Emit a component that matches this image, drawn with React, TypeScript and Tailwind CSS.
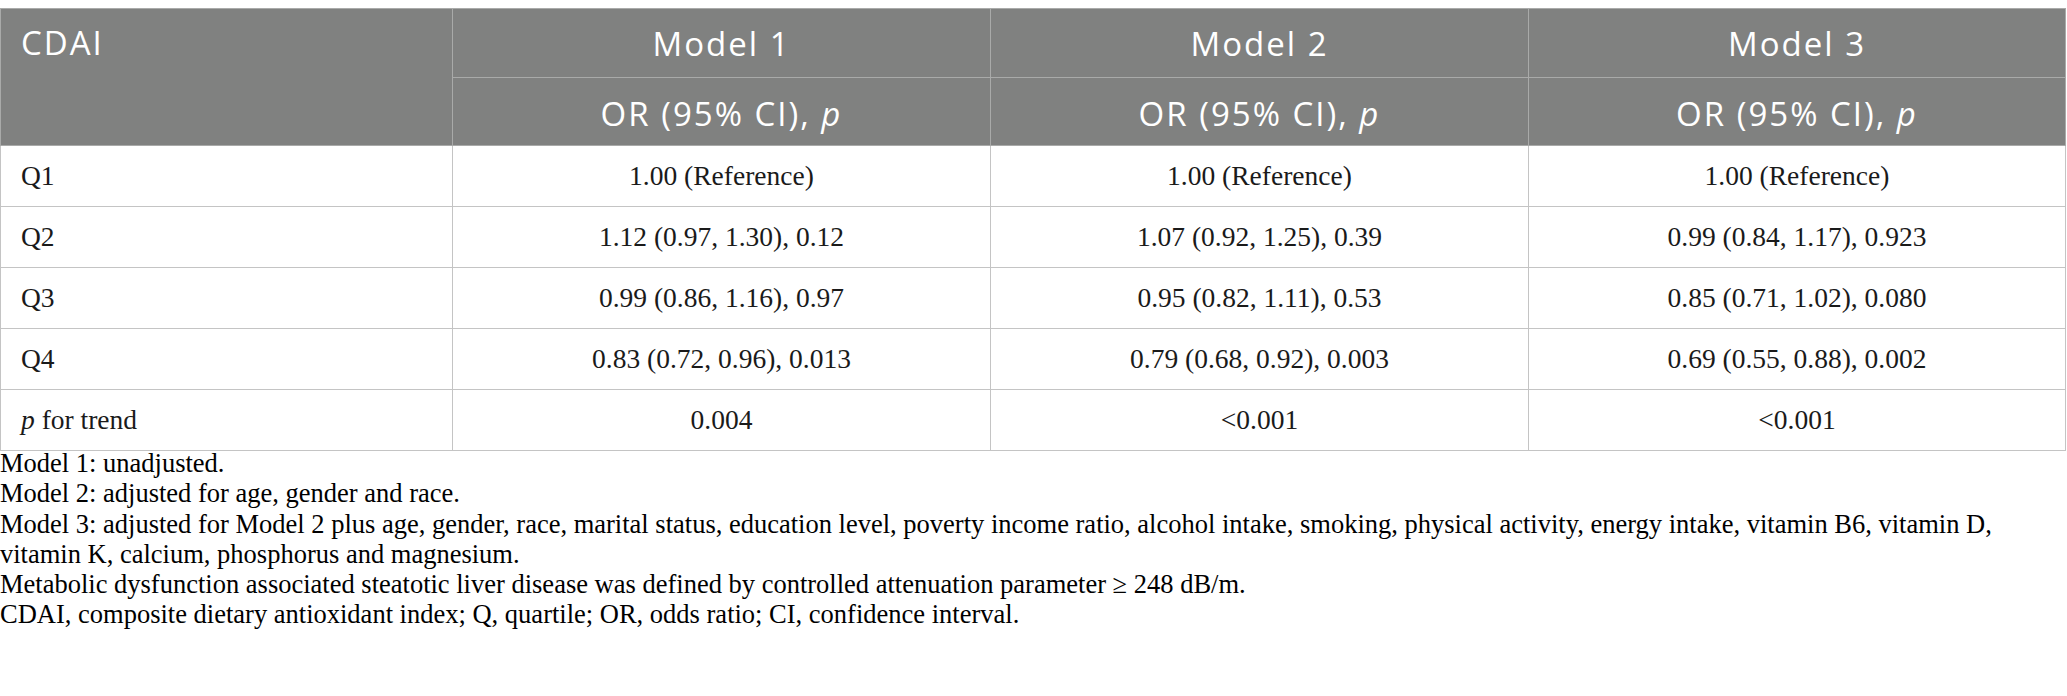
const rows = [
  { label: 'Q1', m1: '1.00 (Reference)', m2: '1.00 (Reference)', m3: '1.00 (Reference)' },
  { label: 'Q2', m1: '1.12 (0.97, 1.30), 0.12', m2: '1.07 (0.92, 1.25), 0.39', m3: '0.99 (0.84, 1.17), 0.923' },
  { label: 'Q3', m1: '0.99 (0.86, 1.16), 0.97', m2: '0.95 (0.82, 1.11), 0.53', m3: '0.85 (0.71, 1.02), 0.080' },
  { label: 'Q4', m1: '0.83 (0.72, 0.96), 0.013', m2: '0.79 (0.68, 0.92), 0.003', m3: '0.69 (0.55, 0.88), 0.002' },
]

const sans = "font-['Open_Sans','Lato',sans-serif]"

export default function App() {
  return (
    <div className="w-[2067px] h-[696px] bg-white pt-2 font-['Liberation_Serif',serif] text-[#1a1a1a]">
      <table className="w-[2065px] table-fixed border-collapse">
        <colgroup>
          <col className="w-[452px]" />
          <col className="w-[538px]" />
          <col className="w-[538px]" />
          <col className="w-[537px]" />
        </colgroup>
        <thead className={`${sans} bg-[#808180] text-white text-[33px] tracking-[2px]`}>
          <tr className="h-[69px]">
            <th rowSpan={2} className="border border-[#a9aaa9] px-5 text-left align-top pt-[9px] font-normal">
              CDAI
            </th>
            <th className="border border-[#a9aaa9] pt-[2px] font-normal">Model 1</th>
            <th className="border border-[#a9aaa9] pt-[2px] font-normal">Model 2</th>
            <th className="border border-[#a9aaa9] pt-[2px] font-normal">Model 3</th>
          </tr>
          <tr className="h-[68px]">
            {[1, 2, 3].map((i) => (
              <th key={i} className="border border-[#a9aaa9] pt-[5px] font-normal">
                OR (95% CI), <i>p</i>
              </th>
            ))}
          </tr>
        </thead>
        <tbody className="text-[27.5px]">
          {rows.map((r) => (
            <tr key={r.label} className="h-[61px]">
              <td className="border border-[#c4c4c4] px-5">{r.label}</td>
              <td className="border border-[#c4c4c4] text-center">{r.m1}</td>
              <td className="border border-[#c4c4c4] text-center">{r.m2}</td>
              <td className="border border-[#c4c4c4] text-center">{r.m3}</td>
            </tr>
          ))}
          <tr className="h-[61px]">
            <td className="border border-[#c4c4c4] px-5">
              <i>p</i> for trend
            </td>
            <td className="border border-[#c4c4c4] text-center">0.004</td>
            <td className="border border-[#c4c4c4] text-center">&lt;0.001</td>
            <td className="border border-[#c4c4c4] text-center">&lt;0.001</td>
          </tr>
        </tbody>
      </table>
      <div className="-mt-[3px] text-[26.5px] leading-[30.3px] text-black">
        <p>Model 1: unadjusted.</p>
        <p>Model 2: adjusted for age, gender and race.</p>
        <p>
          Model 3: adjusted for Model 2 plus age, gender, race, marital status, education level, poverty income ratio,
          alcohol intake, smoking, physical activity, energy intake, vitamin B6, vitamin D,
          <br />
          vitamin K, calcium, phosphorus and magnesium.
        </p>
        <p>Metabolic dysfunction associated steatotic liver disease was defined by controlled attenuation parameter ≥ 248 dB/m.</p>
        <p>CDAI, composite dietary antioxidant index; Q, quartile; OR, odds ratio; CI, confidence interval.</p>
      </div>
    </div>
  )
}
